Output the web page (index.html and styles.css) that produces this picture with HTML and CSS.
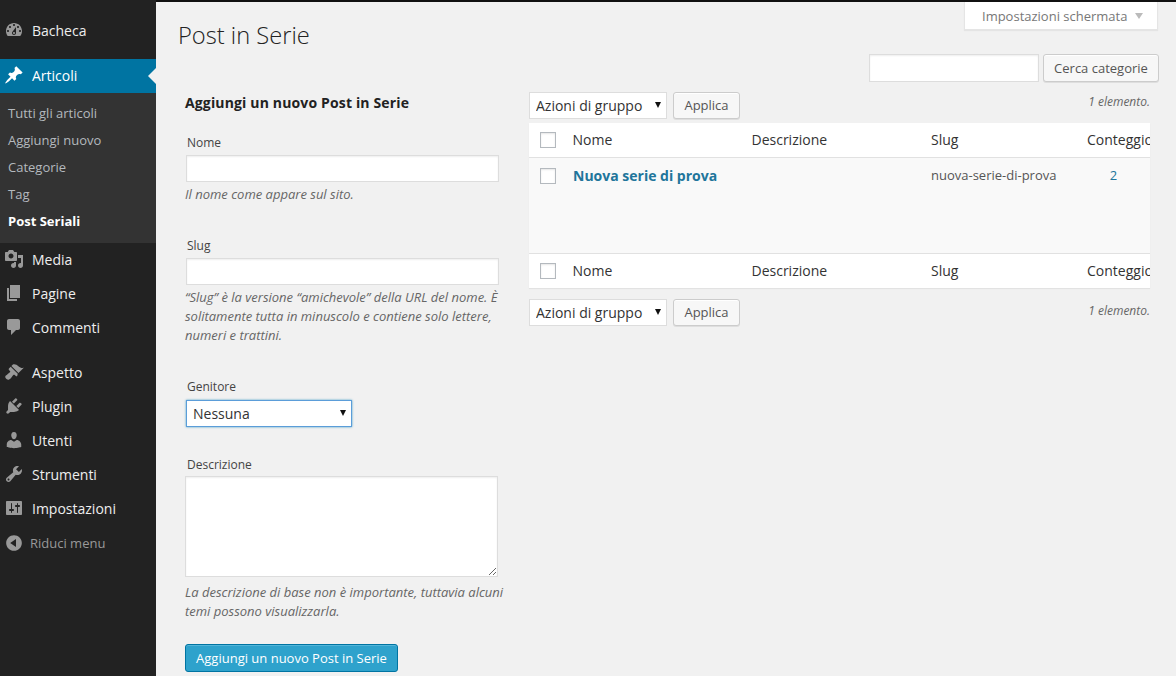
FILE: index.html
```html
<!DOCTYPE html>
<html lang="it">
<head>
<meta charset="utf-8">
<title>Post in Serie</title>
<link rel="stylesheet" href="styles.css">
</head>
<body>
<div class="shell">
  <nav class="sidebar">
    <ul class="menu">
      <li class="item first"><svg class="icon" viewBox="0 0 20 20"><path d="M3.76 16h12.48c1.1-1.37 1.76-3.11 1.76-5 0-4.42-3.58-8-8-8s-8 3.58-8 8c0 1.89.66 3.63 1.76 5zM10 4c.55 0 1 .45 1 1s-.45 1-1 1-1-.45-1-1 .45-1 1-1zM6 6c.55 0 1 .45 1 1s-.45 1-1 1-1-.45-1-1 .45-1 1-1zm8 0c.55 0 1 .45 1 1s-.45 1-1 1-1-.45-1-1 .45-1 1-1zm-5.37 5.55L12 7v6c0 1.1-.9 2-2 2s-2-.9-2-2c0-.57.24-1.08.63-1.45zM4 10c.55 0 1 .45 1 1s-.45 1-1 1-1-.45-1-1 .45-1 1-1zm12 0c.55 0 1 .45 1 1s-.45 1-1 1-1-.45-1-1 .45-1 1-1zm-5 3c0-.55-.45-1-1-1s-1 .45-1 1 .45 1 1 1 1-.45 1-1z"/></svg><span>Bacheca</span></li>
      <li class="item active"><svg class="icon" viewBox="0 0 20 20"><path d="M10.44 3.02l1.82-1.82 6.36 6.35-1.83 1.82c-1.05-.68-2.48-.57-3.41.36l-.75.75c-.92.93-1.04 2.35-.35 3.41l-1.83 1.82-2.41-2.41-2.8 2.79c-.42.42-3.38 2.71-3.8 2.29s1.86-3.39 2.28-3.81l2.79-2.79L4.1 9.36l1.83-1.82c1.05.69 2.48.57 3.4-.36l.75-.75c.93-.92 1.05-2.35.36-3.41z"/></svg><span>Articoli</span></li>
      <li class="submenu">
        <a class="sub">Tutti gli articoli</a>
        <a class="sub">Aggiungi nuovo</a>
        <a class="sub">Categorie</a>
        <a class="sub">Tag</a>
        <a class="sub current">Post Seriali</a>
      </li>
      <li class="item"><svg class="icon" viewBox="0 0 20 20"><path d="M13 11V4c0-.55-.45-1-1-1h-1.67L9 1H5L3.67 3H2c-.55 0-1 .45-1 1v7c0 .55.45 1 1 1h10c.55 0 1-.45 1-1zM7 4.5c1.38 0 2.5 1.12 2.5 2.5S8.38 9.5 7 9.5 4.5 8.38 4.5 7 5.62 4.5 7 4.5zM14 6h5v10.5c0 1.38-1.12 2.5-2.5 2.5S14 17.88 14 16.5s1.12-2.5 2.5-2.5c.17 0 .34.02.5.05V9h-3V6zm-4 8.05V13h2v3.5c0 1.38-1.12 2.5-2.5 2.5S7 17.88 7 16.5 8.12 14 9.5 14c.17 0 .34.02.5.05z"/></svg><span>Media</span></li>
      <li class="item"><svg class="icon" viewBox="0 0 20 20"><path d="M6 15V2h10v13H6zm-1 1h8v2H3V5h2v11z"/></svg><span>Pagine</span></li>
      <li class="item"><svg class="icon" viewBox="0 0 20 20"><path d="M5 2h9c1.1 0 2 .9 2 2v7c0 1.1-.9 2-2 2h-2l-5 5v-5H5c-1.1 0-2-.9-2-2V4c0-1.1.9-2 2-2z"/></svg><span>Commenti</span></li>
      <li class="item spaced"><svg class="icon" viewBox="0 0 20 20"><path d="M14.48 11.06L7.41 3.99l1.5-1.5c.5-.56 2.3-.47 3.51.32 1.21.8 1.43 1.28 2.91 2.1 1.18.64 2.45 1.26 4.45.85zm-.71.71L6.7 4.7 4.93 6.47c-.39.39-.39 1.02 0 1.41l1.06 1.06c.39.39.39 1.03 0 1.42-.6.6-1.43 1.11-2.21 1.69-.35.26-.7.53-1.01.84C1.43 13.23.95 14.44 1.45 15.75c.2.53.76 1.22 1.34 1.53 1.37.8 2.62.22 3.99-1.14.31-.31.58-.66.84-1.01.58-.78 1.09-1.61 1.69-2.21.39-.39 1.03-.39 1.42 0l1.06 1.06c.39.39 1.02.39 1.41 0z"/></svg><span>Aspetto</span></li>
      <li class="item"><svg class="icon" viewBox="0 0 20 20"><path d="M13.11 4.36L9.87 7.6 8 5.73l3.24-3.24c.35-.34 1.05-.2 1.56.32.52.51.66 1.21.31 1.55zm-8 1.77l.91-1.12 9.01 9.01-1.19.84c-.71.71-2.63 1.16-3.82 1.16H6.14L4.9 17.26c-.59.59-1.54.59-2.12 0-.59-.58-.59-1.53 0-2.12l1.24-1.24v-3.88c0-1.13.4-3.19 1.09-3.89zm7.26 3.97l3.24-3.24c.34-.35 1.04-.21 1.55.31.52.51.66 1.21.31 1.55l-3.24 3.25z"/></svg><span>Plugin</span></li>
      <li class="item"><svg class="icon" viewBox="0 0 20 20"><path d="M10 9.25c-2.27 0-2.73-3.44-2.73-3.44C7 4.02 7.82 2 9.97 2c2.16 0 2.98 2.02 2.71 3.81 0 0-.41 3.44-2.68 3.44zm0 2.57L12.72 10c2.39 0 4.52 2.33 4.52 4.53v2.49s-3.65 1.13-7.24 1.13c-3.65 0-7.24-1.13-7.24-1.13v-2.49c0-2.25 1.94-4.48 4.47-4.48z"/></svg><span>Utenti</span></li>
      <li class="item"><svg class="icon" viewBox="0 0 20 20"><path d="M16.68 9.77c-1.34 1.34-3.3 1.67-4.95.99l-5.41 6.52c-.99.99-2.59.99-3.58 0s-.99-2.59 0-3.57l6.52-5.42c-.68-1.65-.35-3.61.99-4.95 1.28-1.28 3.12-1.62 4.72-1.06l-2.89 2.89 2.82 2.82 2.86-2.87c.53 1.58.18 3.39-1.08 4.65zM3.81 16.21c.4.39 1.04.39 1.43 0 .4-.4.4-1.04 0-1.43-.39-.4-1.03-.4-1.43 0-.39.39-.39 1.03 0 1.43z"/></svg><span>Strumenti</span></li>
      <li class="item"><svg class="icon" viewBox="0 0 20 20"><path d="M18 16V4c0-.55-.45-1-1-1H3c-.55 0-1 .45-1 1v12c0 .55.45 1 1 1h14c.55 0 1-.45 1-1zM8 11h1c.55 0 1 .45 1 1s-.45 1-1 1H8v1.5c0 .28-.22.5-.5.5s-.5-.22-.5-.5V13H6c-.55 0-1-.45-1-1s.45-1 1-1h1V5.5c0-.28.22-.5.5-.5s.5.22.5.5V11zm5-2h-1c-.55 0-1-.45-1-1s.45-1 1-1h1V5.5c0-.28.22-.5.5-.5s.5.22.5.5V7h1c.55 0 1 .45 1 1s-.45 1-1 1h-1v5.5c0 .28-.22.5-.5.5s-.5-.22-.5-.5V9z"/></svg><span>Impostazioni</span></li>
      <li class="collapse"><svg class="icon" viewBox="0 0 20 20"><path d="M10 2.16c4.33 0 7.84 3.51 7.84 7.84s-3.51 7.84-7.84 7.84S2.16 14.33 2.16 10 5.71 2.16 10 2.16zm2 11.72V6.12L6.18 9.97z"/></svg><span>Riduci menu</span></li>
    </ul>
  </nav>

  <main class="main">
    <header class="head">
      <h1 class="title">Post in Serie</h1>
      <button class="screen-tab" type="button">Impostazioni schermata<i class="tab-arrow"></i></button>
    </header>

    <div class="search-row">
      <input class="field search-input" type="text" aria-label="Cerca categorie">
      <button class="btn search-btn" type="button">Cerca categorie</button>
    </div>

    <div class="columns">
      <section class="col-left">
        <h2 class="form-title">Aggiungi un nuovo Post in Serie</h2>

        <div class="form-block block-name">
          <label class="lbl">Nome</label>
          <input class="field wide" type="text">
          <p class="hint">Il nome come appare sul sito.</p>
        </div>

        <div class="form-block block-slug">
          <label class="lbl">Slug</label>
          <input class="field wide" type="text">
          <p class="hint">“Slug” è la versione “amichevole” della URL del nome. È solitamente tutta in minuscolo e contiene solo lettere, numeri e trattini.</p>
        </div>

        <div class="form-block block-parent">
          <label class="lbl">Genitore</label>
          <div class="select parent"><select><option>Nessuna</option></select></div>
        </div>

        <div class="form-block block-desc">
          <label class="lbl">Descrizione</label>
          <textarea class="field area"></textarea>
          <p class="hint">La descrizione di base non è importante, tuttavia alcuni temi possono visualizzarla.</p>
        </div>

        <button class="primary" type="button">Aggiungi un nuovo Post in Serie</button>
      </section>

      <section class="col-right">
        <div class="tablenav">
          <div class="select bulk"><select><option>Azioni di gruppo</option></select></div>
          <button class="btn apply" type="button">Applica</button>
          <span class="count">1 elemento.</span>
        </div>

        <div class="table-wrap">
          <table class="list">
            <colgroup><col class="c-cb"><col class="c-name"><col class="c-desc"><col class="c-slug"><col class="c-count"></colgroup>
            <thead>
              <tr><th class="cb"><input class="check" type="checkbox"></th><th class="name">Nome</th><th class="desc">Descrizione</th><th>Slug</th><th>Conteggio</th></tr>
            </thead>
            <tbody>
              <tr>
                <td class="cb"><input class="check" type="checkbox"></td>
                <td class="name"><a class="row-title">Nuova serie di prova</a></td>
                <td></td>
                <td class="slug">nuova-serie-di-prova</td>
                <td class="num"><a>2</a></td>
              </tr>
            </tbody>
            <tfoot>
              <tr><th class="cb"><input class="check" type="checkbox"></th><th class="name">Nome</th><th class="desc">Descrizione</th><th>Slug</th><th>Conteggio</th></tr>
            </tfoot>
          </table>
        </div>

        <div class="tablenav bottom">
          <div class="select bulk"><select><option>Azioni di gruppo</option></select></div>
          <button class="btn apply" type="button">Applica</button>
          <span class="count">1 elemento.</span>
        </div>
      </section>
    </div>
  </main>
</div>
</body>
</html>
```

FILE: styles.css
```css
* { box-sizing: border-box; }
html, body { margin: 0; height: 100%; overflow: hidden; }
body { background: #f1f1f1; color: #444; font-family: "Open Sans", sans-serif; font-size: 13px; }
.shell { display: flex; height: 676px; }

/* sidebar */
.sidebar { width: 156px; flex: none; background: #222; }
.menu { list-style: none; margin: 0; padding: 14px 0 0; }
.item { display: flex; align-items: center; height: 34px; padding: 0 0 2px 4px; color: #eee; font-size: 14px; }
.item span { margin-left: 8px; }
.icon { width: 20px; height: 20px; flex: none; fill: #999; fill-rule: evenodd; }
.first { margin-bottom: 11px; }
.spaced { margin-top: 11px; }
.active { position: relative; background: #0074a2; color: #fff; }
.active .icon { fill: #fff; }
.active::after { content: ""; position: absolute; right: 0; top: 9px; border: 8px solid transparent; border-left-width: 0; border-right-color: #f1f1f1; }
.submenu { display: flex; flex-direction: column; background: #333; padding: 7px 0 8px; height: 150px; }
.sub { height: 27px; line-height: 27px; padding-left: 8px; color: #b4b9be; font-size: 13px; }
.current { color: #fff; font-weight: 700; }
.collapse { display: flex; align-items: center; height: 34px; padding: 0 0 2px 4px; color: #999; font-size: 13px; margin-top: 1px; }
.collapse span { margin-left: 6px; }

/* main */
.main { flex: 1; min-width: 0; border-top: 2px solid #111; }
.head { display: flex; justify-content: space-between; align-items: flex-start; height: 52px; padding-right: 18px; padding-left: 22px; }
.title { margin: 16px 0 0; font-size: 23.7px; line-height: 34px; font-weight: 300; color: #222; }
.screen-tab { display: flex; align-items: center; width: 194px; height: 28px; padding: 0 0 0 17px; border: 1px solid #e5e5e5; border-top: 0; border-radius: 0; background: #fff; box-shadow: 0 1px 1px rgba(0,0,0,.05); color: #777; font: 13px "Open Sans", sans-serif; }
.tab-arrow { margin-left: 8px; border: 4.5px solid transparent; border-top: 6px solid #bbb; border-bottom: 0; }

.search-row { display: flex; justify-content: flex-end; gap: 4px; padding-right: 17px; }
.field { border: 1px solid #ddd; background: #fff; box-shadow: inset 0 1px 2px rgba(0,0,0,.07); border-radius: 0; display: block; margin: 0; padding: 0; outline: 0; }
.search-input { width: 170px; height: 28px; }
.btn { height: 28px; border: 1px solid #ccc; border-radius: 3px; background: #f7f7f7; box-shadow: inset 0 1px 0 #fff, 0 1px 0 rgba(0,0,0,.08); color: #555; font: 13px "Open Sans", sans-serif; padding: 0 10px 1px; white-space: nowrap; }
.search-btn { width: 116px; }

.columns { display: flex; padding-left: 29px; }
.col-left { width: 344px; flex: none; }
.col-right { width: 621px; flex: none; padding-top: 10px; }

/* form */
.form-title { margin: 11px 0 0; height: 20px; font-size: 14px; line-height: 20px; font-weight: 700; color: #222; letter-spacing: .15px; }
.lbl { display: block; margin-left: 2px; padding-top: 1px; font-size: 12px; line-height: 18px; color: #444; }
.form-block { margin-top: 0; }
.block-name { margin-top: 20px; }
.block-slug { margin-top: 32px; }
.block-parent { margin-top: 32px; }
.block-desc { margin-top: 28px; }
.wide { width: 313px; height: 27px; margin: 3px 0 0 1px; }
.hint { margin: 3px 0 0; font-size: 13px; line-height: 19px; font-style: italic; color: #666; width: 322px; }
.block-slug .hint { width: 316px; }
.select { position: relative; background: #fff; }
.select select { display: block; width: 100%; height: 100%; appearance: none; -webkit-appearance: none; border: 1px solid #ddd; border-radius: 0; background: transparent; color: #333; font: 14px "Open Sans", sans-serif; padding: 0 0 1px 6px; margin: 0; outline: 0; }
.select::after { content: ""; position: absolute; right: 6px; top: 10px; border: 3.5px solid transparent; border-top: 6px solid #111; border-bottom: 0; }
.parent { width: 166px; height: 27px; margin: 4px 0 0 1px; box-shadow: 0 0 2px rgba(30,140,190,.8); }
.parent select { border-color: #5b9dd9; }
.area { width: 313px; height: 101px; margin-top: 2px; resize: vertical; }
.block-desc .hint { margin-top: 6px; }
.primary { display: block; width: 213px; height: 28px; margin-top: 23px; padding: 0 0 1px; border: 1px solid #0074a2; border-radius: 3px; background: #2ea2cc; box-shadow: inset 0 1px 0 rgba(120,200,230,.5); color: #fff; font: 13px "Open Sans", sans-serif; }

/* table area */
.tablenav { display: flex; align-items: flex-start; height: 31px; }
.bulk { width: 138px; height: 27px; }
.apply { width: 67px; height: 27px; margin-left: 6px; }
.count { margin-left: auto; font-size: 12px; line-height: 20px; font-style: italic; color: #666; }
.tablenav.bottom { margin-top: 11px; }
.bottom .count { margin-top: 2px; }
.table-wrap { overflow: hidden; box-shadow: 0 1px 1px rgba(0,0,0,.06); background: #fff; }
.list { width: 621px; table-layout: fixed; border-collapse: collapse; }
.c-cb { width: 33px; }
.c-name { width: 179px; }
.c-desc { width: 180px; }
.c-slug { width: 156px; }
.c-count { width: 73px; }
.list th { height: 35px; padding: 0 0 0 10px; text-align: left; font-size: 14px; font-weight: 400; color: #333; white-space: nowrap; overflow: hidden; background: #fff; }
.list thead th { height: 34px; border-bottom: 1px solid #e1e1e1; }
.list tfoot th { border-top: 1px solid #e1e1e1; }
.list td { height: 96px; padding: 7px 0 0 10px; vertical-align: top; background: #f9f9f9; font-size: 13px; line-height: 20px; color: #555; }
.list .cb { padding: 0 0 0 11px; }
.list td.cb { padding-top: 10px; }
.list th.name { padding-left: 10.5px; }
.list th.desc { padding-left: 10.5px; }
.list td.name { padding: 8px 0 0 11px; }
.check { display: block; appearance: none; -webkit-appearance: none; width: 16px; height: 16px; margin: 0; border: 1px solid #b4b9be; background: #fff; box-shadow: inset 0 1px 2px rgba(0,0,0,.1); border-radius: 0; }
.row-title { font-size: 14px; font-weight: 700; color: #21759b; }
.list .slug { font-size: 13px; }
.list .num { text-align: center; padding-left: 0; color: #21759b; }
```
